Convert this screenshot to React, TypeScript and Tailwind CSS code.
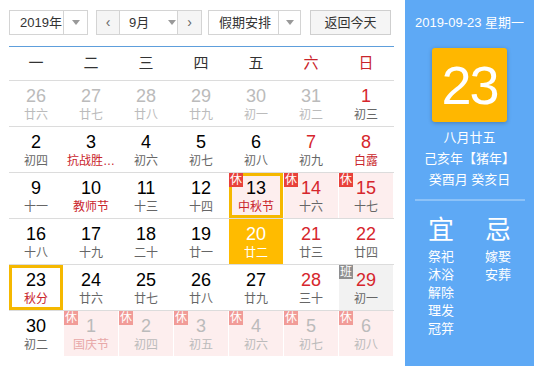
import React from "react";

type Cell = {
  d: string;
  l: string;
  other?: boolean;
  red?: boolean;
  fest?: boolean;
  badge?: "休" | "班";
  bg?: "pink" | "gray" | "yellow";
  sel?: boolean;
};

const rows: Cell[][] = [
  [
    { d: "26", l: "廿六", other: true },
    { d: "27", l: "廿七", other: true },
    { d: "28", l: "廿八", other: true },
    { d: "29", l: "廿九", other: true },
    { d: "30", l: "初一", other: true },
    { d: "31", l: "初二", other: true },
    { d: "1", l: "初三", red: true },
  ],
  [
    { d: "2", l: "初四" },
    { d: "3", l: "抗战胜…", fest: true },
    { d: "4", l: "初六" },
    { d: "5", l: "初七" },
    { d: "6", l: "初八" },
    { d: "7", l: "初九", red: true },
    { d: "8", l: "白露", red: true, fest: true },
  ],
  [
    { d: "9", l: "十一" },
    { d: "10", l: "教师节", fest: true },
    { d: "11", l: "十三" },
    { d: "12", l: "十四" },
    { d: "13", l: "中秋节", fest: true, badge: "休", bg: "pink", sel: true },
    { d: "14", l: "十六", red: true, badge: "休", bg: "pink" },
    { d: "15", l: "十七", red: true, badge: "休", bg: "pink" },
  ],
  [
    { d: "16", l: "十八" },
    { d: "17", l: "十九" },
    { d: "18", l: "二十" },
    { d: "19", l: "廿一" },
    { d: "20", l: "廿二", bg: "yellow" },
    { d: "21", l: "廿三", red: true },
    { d: "22", l: "廿四", red: true },
  ],
  [
    { d: "23", l: "秋分", fest: true, sel: true },
    { d: "24", l: "廿六" },
    { d: "25", l: "廿七" },
    { d: "26", l: "廿八" },
    { d: "27", l: "廿九" },
    { d: "28", l: "三十", red: true },
    { d: "29", l: "初一", red: true, badge: "班", bg: "gray" },
  ],
  [
    { d: "30", l: "初二" },
    { d: "1", l: "国庆节", other: true, fest: true, badge: "休", bg: "pink" },
    { d: "2", l: "初四", other: true, badge: "休", bg: "pink" },
    { d: "3", l: "初五", other: true, badge: "休", bg: "pink" },
    { d: "4", l: "初六", other: true, badge: "休", bg: "pink" },
    { d: "5", l: "初七", other: true, badge: "休", bg: "pink" },
    { d: "6", l: "初八", other: true, badge: "休", bg: "pink" },
  ],
];

const weekdays = ["一", "二", "三", "四", "五", "六", "日"];

const Caret = () => (
  <span className="block w-0 h-0 border-l-[4px] border-r-[4px] border-t-[5px] border-l-transparent border-r-transparent border-t-[#999]" />
);

const DayCell = ({ c }: { c: Cell }) => {
  const bg =
    c.bg === "yellow"
      ? "bg-[#ffbb00]"
      : c.bg === "pink"
      ? "bg-[#fdeeee]"
      : c.bg === "gray"
      ? "bg-[#f2f2f2]"
      : "";
  const numColor =
    c.bg === "yellow"
      ? "text-white"
      : c.other
      ? "text-[#bbb]"
      : c.red
      ? "text-[#d6262d]"
      : "text-black";
  const lunarColor =
    c.bg === "yellow"
      ? "text-white"
      : c.other
      ? c.fest
        ? "text-[#e8a8a8]"
        : "text-[#bbb]"
      : c.fest
      ? "text-[#c9252c]"
      : "text-[#666]";

  return (
    <div className={`relative h-[45px] ${bg}`}>
      {c.sel && (
        <div className="absolute inset-0 border-[3px] border-[#f5b800]" />
      )}
      {c.badge && (
        <span
          className={`absolute left-0 top-0 w-[14px] h-[14px] flex items-center justify-center text-[12px] leading-none text-white ${
            c.badge === "班"
              ? "bg-[#8f8f8f]"
              : c.other
              ? "bg-[#f19b97]"
              : "bg-[#e8413a]"
          }`}
        >
          {c.badge}
        </span>
      )}
      <div className="relative flex flex-col items-center pt-[5px]">
        <span
          className={`text-[18px] leading-[20px] font-['Liberation_Sans',Arial,sans-serif] ${numColor}`}
        >
          {c.d}
        </span>
        <span className={`text-[12px] leading-[16px] mt-[1px] ${lunarColor}`}>
          {c.l}
        </span>
      </div>
    </div>
  );
};

export default function App() {
  return (
    <div className="w-[534px] h-[366px] flex bg-white overflow-hidden font-['Liberation_Sans','Noto_Sans_CJK_SC',sans-serif] text-[#333]">
      <div className="w-[405px] pl-[9px] pt-[10px]">
        <div className="flex h-[25px] text-[13px] w-[385px]">
          <div className="w-[79px] flex border border-[#d4d4d4]">
            <span className="flex-1 flex items-center pl-[10px]">2019年</span>
            <span className="w-[24px] border-l border-[#d4d4d4] flex items-center justify-center">
              <Caret />
            </span>
          </div>
          <div className="ml-[8px] w-[106px] flex border border-[#d4d4d4]">
            <span className="w-[22px] bg-[#f5f5f5] flex items-center justify-center text-[#666] text-[14px]">
              ‹
            </span>
            <span className="flex-1 flex items-center border-l border-r border-[#d4d4d4] pl-[9px] gap-[19px]">
              9月
              <Caret />
            </span>
            <span className="w-[23px] bg-[#f5f5f5] flex items-center justify-center text-[#666] text-[14px]">
              ›
            </span>
          </div>
          <div className="ml-[6px] w-[93px] flex border border-[#d4d4d4]">
            <span className="flex-1 flex items-center pl-[10px]">假期安排</span>
            <span className="w-[22px] border-l border-[#d4d4d4] flex items-center justify-center">
              <Caret />
            </span>
          </div>
          <button className="ml-[9px] w-[81px] border border-[#cfcfcf] bg-[#f5f5f5] text-[13px] text-[#333]">
            返回今天
          </button>
        </div>

        <div className="mt-[11px] w-[385px] h-px bg-[#5e9fdc]" />

        <div className="grid grid-cols-[repeat(7,54px)] gap-x-px h-[33px] items-center text-[15px]">
          {weekdays.map((w, i) => (
            <span
              key={w}
              className={`text-center ${i > 4 ? "text-[#c9252c]" : "text-[#333]"}`}
            >
              {w}
            </span>
          ))}
        </div>

        {rows.map((row, ri) => (
          <div
            key={ri}
            className="w-[385px] border-t border-[#dcdcdc] grid grid-cols-[repeat(7,54px)] gap-x-px"
          >
            {row.map((c, ci) => (
              <DayCell key={ci} c={c} />
            ))}
          </div>
        ))}
      </div>

      <div className="w-[129px] h-full bg-[#5ea9f5] text-white flex flex-col items-center">
        <div className="mt-[14px] text-[13px] leading-[18px] whitespace-nowrap">
          2019-09-23 星期一
        </div>
        <div className="mt-[16px] w-[75px] h-[74px] rounded-[3px] bg-[#ffb700] shadow-[0_1px_4px_rgba(0,0,0,0.25)] flex items-center justify-center text-[54px] leading-none font-['Liberation_Sans',Arial,sans-serif] tracking-[-2px]">
          23
        </div>
        <div className="mt-[5px] text-[13px] leading-[21px] text-center">
          <div>八月廿五</div>
          <div>己亥年【猪年】</div>
          <div>癸酉月 癸亥日</div>
        </div>
        <div className="mt-[9px] w-[110px] h-[2px] bg-[#8cc2f8]" />
        <div className="mt-[14px] flex gap-[31px] text-center">
          <div className="flex flex-col items-center w-[26px]">
            <span className="text-[26px] leading-[30px]">宜</span>
            <div className="mt-[3px] text-[13px] leading-[18px] whitespace-nowrap">
              <div>祭祀</div>
              <div>沐浴</div>
              <div>解除</div>
              <div>理发</div>
              <div>冠笄</div>
            </div>
          </div>
          <div className="flex flex-col items-center w-[26px]">
            <span className="text-[26px] leading-[30px]">忌</span>
            <div className="mt-[3px] text-[13px] leading-[18px] whitespace-nowrap">
              <div>嫁娶</div>
              <div>安葬</div>
            </div>
          </div>
        </div>
      </div>
    </div>
  );
}
